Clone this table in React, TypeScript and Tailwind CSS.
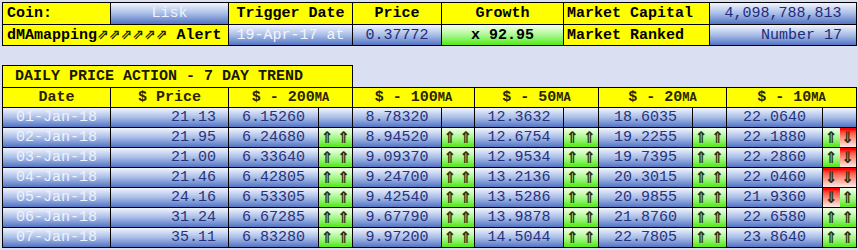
import React from "react";

type Dir = "u" | "d";

interface DayRow {
    date: string,
    price: string,
    ma: [string, string, string, string, string],
    sig: [Dir, Dir][] | null
}

const blue = "bg-linear-to-b from-[#f2f5fd] via-[#a9bde7] to-[#5474c2]";
const green = "bg-linear-to-b from-[#eeffe2] from-5% to-[#5ded1f] to-90%";
const red = "bg-linear-to-b from-[#ff0000] from-10% to-[#ffe8e8]";
const yellow = "bg-[#ffff00]";

const rows: DayRow[] = [
    { date: "01-Jan-18", price: "21.13", ma: ["6.15260", "8.78320", "12.3632", "18.6035", "22.0640"], sig: null },
    { date: "02-Jan-18", price: "21.95", ma: ["6.24680", "8.94520", "12.6754", "19.2255", "22.1880"], sig: [["u", "u"], ["u", "u"], ["u", "u"], ["u", "u"], ["u", "d"]] },
    { date: "03-Jan-18", price: "21.00", ma: ["6.33640", "9.09370", "12.9534", "19.7395", "22.2860"], sig: [["u", "u"], ["u", "u"], ["u", "u"], ["u", "u"], ["u", "d"]] },
    { date: "04-Jan-18", price: "21.46", ma: ["6.42805", "9.24700", "13.2136", "20.3015", "22.0460"], sig: [["u", "u"], ["u", "u"], ["u", "u"], ["u", "u"], ["d", "d"]] },
    { date: "05-Jan-18", price: "24.16", ma: ["6.53305", "9.42540", "13.5286", "20.9855", "21.9360"], sig: [["u", "u"], ["u", "u"], ["u", "u"], ["u", "u"], ["d", "u"]] },
    { date: "06-Jan-18", price: "31.24", ma: ["6.67285", "9.67790", "13.9878", "21.8760", "22.6580"], sig: [["u", "u"], ["u", "u"], ["u", "u"], ["u", "u"], ["u", "u"]] },
    { date: "07-Jan-18", price: "35.11", ma: ["6.83280", "9.97200", "14.5044", "22.7805", "23.8640"], sig: [["u", "u"], ["u", "u"], ["u", "u"], ["u", "u"], ["u", "u"]] },
];

const Arrow: React.FC<{ dir: Dir }> = ({ dir }) => (
    <div className={`flex-1 flex items-center justify-center ${dir === "u" ? green : red}`}>
        <span className="font-['DejaVu_Sans',sans-serif] font-bold text-[16px] leading-none text-[#27330c]">
            {dir === "u" ? "⇑" : "⇓"}
        </span>
    </div>
);

const Ma: React.FC = () => <span className="text-[12px]">MA</span>;

const App: React.FC = () => {
    return (
        <div className="w-[858px] h-[250px] bg-[#dae0f2] pt-[2px] pl-[2px] font-['Liberation_Mono',monospace] text-[15px] leading-none">
            {/* coin summary */}
            <div className="grid grid-cols-[107px_117px_123px_88px_121px_145px_146px] grid-rows-[21px_20px] gap-px p-px bg-black w-[855px]">
                <div className={`${yellow} flex items-center pl-1 font-bold text-black`}>Coin:</div>
                <div className={`${blue} flex items-center justify-center text-[#eef2fc]`}>Lisk</div>
                <div className={`${yellow} flex items-center justify-center font-bold text-black`}>Trigger Date</div>
                <div className={`${yellow} flex items-center justify-center font-bold text-black`}>Price</div>
                <div className={`${yellow} flex items-center justify-center font-bold text-black`}>Growth</div>
                <div className={`${yellow} flex items-center pl-[3px] font-bold text-black`}>Market Capital</div>
                <div className={`${blue} flex items-center justify-center text-[#1f2c78]`}>4,098,788,813</div>

                <div className={`${yellow} col-span-2 flex items-center pl-1 font-bold text-black whitespace-pre`}>
                    <span>dMAmapping<span className="font-['DejaVu_Sans',sans-serif] font-bold text-[14px] text-[#1a1a00]">⇗⇗⇗⇗⇗⇗</span> Alert</span>
                </div>
                <div className={`${blue} flex items-center justify-center text-[#f2f5fd]`}>19-Apr-17 at</div>
                <div className={`${blue} flex items-center justify-center text-[#1f2c78]`}>0.37772</div>
                <div className={`${green} flex items-center justify-center font-bold text-black`}>x 92.95</div>
                <div className={`${yellow} flex items-center pl-[3px] font-bold text-black`}>Market Ranked</div>
                <div className={`${blue} flex items-center justify-end pr-[14px] text-[#1f2c78]`}>Number 17</div>
            </div>

            {/* 7 day trend */}
            <div className="mt-[19px] w-[351px] h-[22px] border border-b-0 border-black">
                <div className={`${yellow} h-[21px] flex items-center pl-3 font-bold text-[#1a1800]`}>
                    DAILY PRICE ACTION - 7 DAY TREND
                </div>
            </div>
            <div className="grid grid-cols-[107px_117px_89px_33px_88px_32px_88px_34px_93px_33px_95px_33px] auto-rows-[19px] gap-px p-px bg-black w-[855px]">
                <div className={`${yellow} flex items-center justify-center font-bold text-[#2b2400]`}>Date</div>
                <div className={`${yellow} flex items-center justify-center font-bold text-[#2b2400]`}>$ Price</div>
                <div className={`${yellow} col-span-2 flex items-center justify-center font-bold text-[#2b2400]`}>$ - 200<Ma /></div>
                <div className={`${yellow} col-span-2 flex items-center justify-center font-bold text-[#2b2400]`}>$ - 100<Ma /></div>
                <div className={`${yellow} col-span-2 flex items-center justify-center font-bold text-[#2b2400]`}>$ - 50<Ma /></div>
                <div className={`${yellow} col-span-2 flex items-center justify-center font-bold text-[#2b2400]`}>$ - 20<Ma /></div>
                <div className={`${yellow} col-span-2 flex items-center justify-center font-bold text-[#2b2400]`}>$ - 10<Ma /></div>

                {rows.map((row) => (
                    <React.Fragment key={row.date}>
                        <div className={`${blue} flex items-center justify-center text-[#eef2fc]`}>{row.date}</div>
                        <div className={`${blue} flex items-center justify-end pr-3 text-[#26327e]`}>{row.price}</div>
                        {row.ma.map((v, i) => (
                            <React.Fragment key={i}>
                                <div className={`${blue} flex items-center justify-center text-[#26327e]`}>{v}</div>
                                {row.sig ? (
                                    <div className="flex">
                                        <Arrow dir={row.sig[i][0]} />
                                        <Arrow dir={row.sig[i][1]} />
                                    </div>
                                ) : (
                                    <div className={blue} />
                                )}
                            </React.Fragment>
                        ))}
                    </React.Fragment>
                ))}
            </div>
        </div>
    );
};

export default App;
